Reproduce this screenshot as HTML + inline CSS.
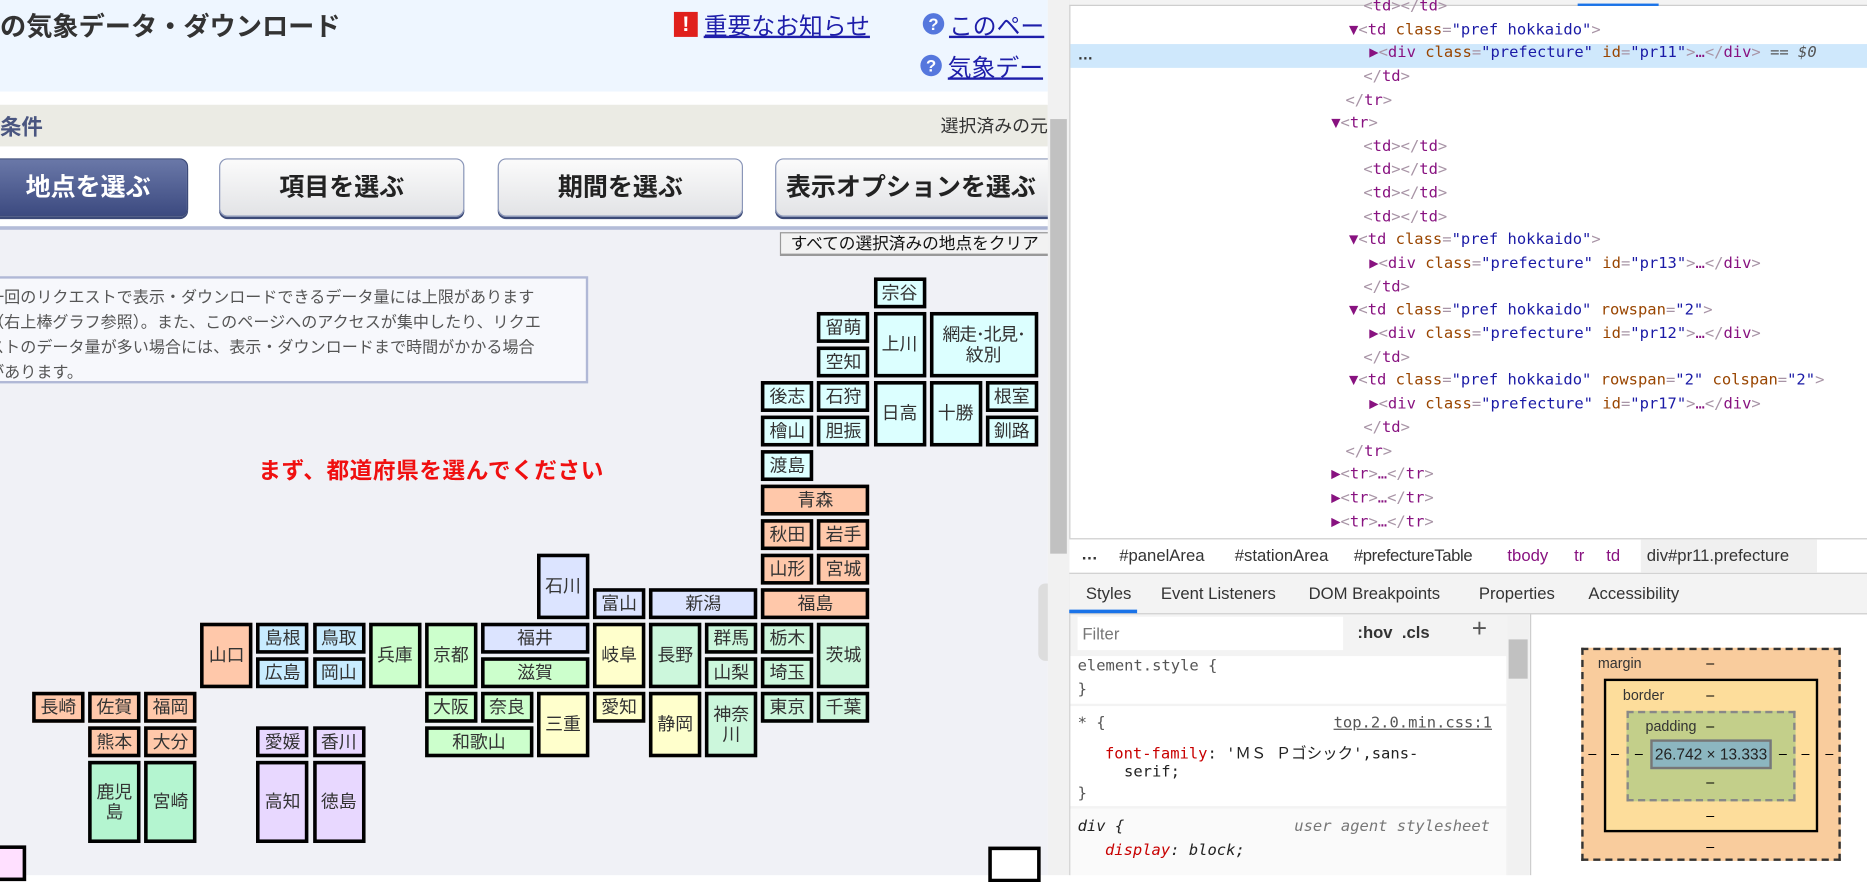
<!DOCTYPE html>
<html><head><meta charset="utf-8"><style>
*{margin:0;padding:0;box-sizing:border-box}
html,body{width:1867px;height:875px;overflow:hidden;background:#fff}
#w{position:absolute;left:0;top:0;width:1568px;height:735px;transform:scale(1.19069);transform-origin:0 0;font-family:"Liberation Sans","Noto Sans CJK JP",sans-serif}
.a{position:absolute;white-space:nowrap}
.btn{position:absolute;top:133px;height:49px;border-radius:7px;border:1px solid #8a96b8;background:linear-gradient(#fbfbfb,#e2e3e6);font-weight:bold;font-size:21px;color:#222;text-align:center;line-height:47px;box-shadow:0 2px 0 #3c4a78}
.c{position:absolute;border:3px solid #000;font-size:15px;color:#333;display:flex;align-items:center;justify-content:center;text-align:center;line-height:17px}
.h{background:#dcffff}.t{background:#ffc8aa}.k{background:#ccf7dc}.b{background:#dce4ff}.y{background:#ffffcc}.g{background:#ccffcc}.cb{background:#c8ecff}.s{background:#e8d8ff}.q{background:#b4f5d0}
.m{font-family:"DejaVu Sans Mono","Liberation Mono",monospace;font-size:13px;position:absolute;white-space:nowrap;color:#881280}
.an{color:#994500}.av{color:#1a1aa6}.pu{color:#a894a6}
.tab{position:absolute;top:490px;font-size:14px;color:#333}
</style></head><body><div id="w">
<div class="a" style="left:0;top:0;width:880px;height:77px;background:#eef6ff"></div>
<div class="a" style="left:0;top:77px;width:880px;height:11px;background:#fff"></div>
<div class="a" style="left:0;top:88px;width:880px;height:35px;background:#ebebe4"></div>
<div class="a" style="left:0;top:123px;width:880px;height:612px;background:#f0f1f6"></div>
<div class="a" style="left:0;top:123px;width:880px;height:67px;background:#fff"></div>
<div class="a" style="left:0;top:190px;width:880px;height:3px;background:#b4bcd8"></div>
<div class="a" style="left:0;top:5px;font-size:22px;font-weight:bold;color:#333">の気象データ・ダウンロード</div>
<div class="a" style="left:566px;top:10px;width:20px;height:21px;background:#e0201c;color:#fff;font-weight:bold;font-size:18px;line-height:21px;text-align:center">!</div>
<div class="a" style="left:591px;top:6px;font-size:20px;color:#1e1eaa;text-decoration:underline">重要なお知らせ</div>
<div class="a" style="left:775px;top:11px;width:18px;height:18px;border-radius:50%;background:#5577dd;color:#fff;font-size:14px;font-weight:bold;line-height:18px;text-align:center">?</div>
<div class="a" style="left:797px;top:6px;font-size:20px;color:#1e1eaa;text-decoration:underline">このペー</div>
<div class="a" style="left:773px;top:46px;width:18px;height:18px;border-radius:50%;background:#5577dd;color:#fff;font-size:14px;font-weight:bold;line-height:18px;text-align:center">?</div>
<div class="a" style="left:796px;top:41px;font-size:20px;color:#1e1eaa;text-decoration:underline">気象デー</div>
<div class="a" style="left:0;top:93px;font-size:18px;font-weight:bold;color:#4a5680">条件</div>
<div class="a" style="left:790px;top:95px;font-size:15px;color:#333">選択済みの元</div>
<div class="btn" style="left:-10px;width:168px;background:linear-gradient(#6a78a8,#3c4a80);color:#fff;border-color:#3c4a78">地点を選ぶ</div>
<div class="btn" style="left:184px;width:206px">項目を選ぶ</div>
<div class="btn" style="left:418px;width:206px">期間を選ぶ</div>
<div class="btn" style="left:651px;width:240px;text-align:left;padding-left:8px">表示オプションを選ぶ</div>
<div class="a" style="left:655px;top:195px;width:240px;height:20px;background:#f2f2f2;border:1px solid #999;border-bottom-width:2px;font-size:14px;line-height:17px;padding-left:8px;color:#111">すべての選択済みの地点をクリア</div>
<div class="a" style="left:-4px;top:232px;width:498px;height:90px;border:2px solid #b0b8d6;background:#f7f8fc;font-size:13.5px;color:#555;line-height:21px;padding:5px 0 0 0;white-space:normal;overflow:hidden"><div style="margin-left:-8px;white-space:nowrap">一回のリクエストで表示・ダウンロードできるデータ量には上限があります<br>（右上棒グラフ参照）。また、このページへのアクセスが集中したり、リクエ<br>ストのデータ量が多い場合には、表示・ダウンロードまで時間がかかる場合<br>があります。</div></div>
<div class="a" style="left:217px;top:381px;font-size:19px;font-weight:bold;color:#f01010;letter-spacing:0.5px">まず、都道府県を選んでください</div>
<div id="grid"></div>
<div class="c" style="left:-3px;top:710px;width:25px;height:30px;background:#ffe0ff"></div>
<div class="c" style="left:830px;top:711px;width:44px;height:30px;background:#fff"></div>
<div class="a" style="left:872px;top:490px;width:10px;height:65px;border-radius:6px 0 0 6px;background:#ddd"></div>
<div class="a" style="left:880px;top:0;width:18px;height:735px;background:#f1f1f1"></div>
<div class="a" style="left:882px;top:100px;width:14px;height:365px;background:#c1c1c1"></div>
<div class="a" style="left:898px;top:0;width:670px;height:735px;background:#fff;border-left:1px solid #ccc"></div>
<div class="a" style="left:898px;top:0;width:670px;height:5px;background:#f3f3f3;border-bottom:1px solid #ccc"></div>
<div class="a" style="left:1325px;top:3px;width:68px;height:2px;background:#1a73e8"></div>
<div class="a" style="left:899px;top:37px;width:669px;height:20px;background:#cfe8fc"></div>
<div class="a" style="left:905px;top:38px;font-size:13px;color:#333;font-weight:bold">…</div>
<div id="code"></div>
<div class="a" style="left:898px;top:452px;width:670px;height:30px;background:#fff;border-top:1px solid #ccc;border-bottom:1px solid #ccc"></div>
<div class="a" style="left:1378px;top:453px;width:148px;height:28px;background:#f0f0f0"></div>
<div class="a" style="left:908px;top:457px;font-size:14px;color:#333;font-weight:bold">…</div>
<div class="a" style="left:940px;top:458px;font-size:14px;color:#333">#panelArea</div>
<div class="a" style="left:1037px;top:458px;font-size:14px;color:#333">#stationArea</div>
<div class="a" style="left:1137px;top:458px;font-size:14px;color:#333;letter-spacing:-0.3px">#prefectureTable</div>
<div class="a" style="left:1266px;top:458px;font-size:14px;color:#881280">tbody</div>
<div class="a" style="left:1322px;top:458px;font-size:14px;color:#881280">tr</div>
<div class="a" style="left:1349px;top:458px;font-size:14px;color:#881280">td</div>
<div class="a" style="left:1383px;top:458px;font-size:14px;color:#333">div#pr11.prefecture</div>
<div class="a" style="left:898px;top:482px;width:670px;height:34px;background:#f3f3f3;border-bottom:1px solid #ccc"></div>
<div class="a" style="left:898px;top:512px;width:57px;height:3px;background:#1a73e8"></div>
<div class="tab" style="left:912px">Styles</div>
<div class="tab" style="left:975px">Event Listeners</div>
<div class="tab" style="left:1099px">DOM Breakpoints</div>
<div class="tab" style="left:1242px">Properties</div>
<div class="tab" style="left:1334px">Accessibility</div>
<div class="a" style="left:899px;top:516px;width:386px;height:219px;background:#f3f3f3"></div>
<div class="a" style="left:905px;top:518px;width:223px;height:28px;background:#fff;font-size:14px;color:#777;padding:6px 0 0 4px">Filter</div>
<div class="a" style="left:1140px;top:523px;font-size:14px;font-weight:bold;color:#333">:hov&nbsp; .cls</div>
<div class="a" style="left:1236px;top:515px;font-size:22px;color:#555">+</div>
<div class="a" style="left:1266px;top:517px;width:18px;height:218px;background:#f1f1f1"></div>
<div class="a" style="left:1267px;top:537px;width:16px;height:33px;background:#c1c1c1"></div>
<div class="a" style="left:1285px;top:516px;width:1px;height:219px;background:#ccc"></div>
<div class="a" style="left:899px;top:551px;width:366px;height:40px;background:#fff"></div>
<div class="m" style="left:905px;top:552px;color:#555">element.style {</div>
<div class="m" style="left:905px;top:572px;color:#555">}</div>
<div class="a" style="left:899px;top:593px;width:366px;height:84px;background:#fff"></div>
<div class="m" style="left:905px;top:600px;color:#555">* {</div>
<div class="m" style="left:1120px;top:600px;color:#555;text-decoration:underline">top.2.0.min.css:1</div>
<div class="m" style="left:928px;top:622px;color:#222"><span style="color:#c80000">font-family</span>: 'ＭＳ Ｐゴシック',sans-</div>
<div class="m" style="left:944px;top:641px;color:#222">serif;</div>
<div class="m" style="left:905px;top:659px;color:#555">}</div>
<div class="a" style="left:899px;top:679px;width:366px;height:56px;background:#fafafa"></div>
<div class="m" style="left:905px;top:687px;color:#222;font-style:italic">div {</div>
<div class="m" style="left:1087px;top:687px;color:#777;font-style:italic">user agent stylesheet</div>
<div class="m" style="left:928px;top:707px;color:#222;font-style:italic"><span style="color:#c80000">display</span>: block;</div>
<div class="a" style="left:1328px;top:544px;width:218px;height:179px;background:#f9cc9d;border:2px dashed #333"></div>
<div class="a" style="left:1347px;top:570px;width:180px;height:129px;background:#fddd9b;border:2px solid #000"></div>
<div class="a" style="left:1366px;top:597px;width:142px;height:76px;background:#c3cf8a;border:2px dashed #888"></div>
<div class="a" style="left:1386px;top:621px;width:102px;height:25px;background:#8cb6c0;border:2px solid #777;font-size:13px;color:#222;text-align:center;line-height:21px">26.742 × 13.333</div>
<div class="a" style="left:1342px;top:550px;font-size:12px;color:#333">margin</div>
<div class="a" style="left:1363px;top:577px;font-size:12px;color:#333">border</div>
<div class="a" style="left:1382px;top:603px;font-size:12px;color:#333">padding</div>
<div class="a" style="left:1433px;top:550px;font-size:12px">–</div>
<div class="a" style="left:1433px;top:577px;font-size:12px">–</div>
<div class="a" style="left:1433px;top:603px;font-size:12px">–</div>
<div class="a" style="left:1433px;top:650px;font-size:12px">–</div>
<div class="a" style="left:1433px;top:678px;font-size:12px">–</div>
<div class="a" style="left:1433px;top:704px;font-size:12px">–</div>
<div class="a" style="left:1334px;top:626px;font-size:12px">–</div>
<div class="a" style="left:1353px;top:626px;font-size:12px">–</div>
<div class="a" style="left:1373px;top:626px;font-size:12px">–</div>
<div class="a" style="left:1494px;top:626px;font-size:12px">–</div>
<div class="a" style="left:1513px;top:626px;font-size:12px">–</div>
<div class="a" style="left:1533px;top:626px;font-size:12px">–</div>
</div>
<script>
var P=[["宗谷",15,0,1,1,"h"],["留萌",14,1,1,1,"h"],["空知",14,2,1,1,"h"],["上川",15,1,1,2,"h"],["<span style='letter-spacing:-1px;white-space:nowrap'>網走･北見･</span><br>紋別",16,1,2,2,"h"],
["後志",13,3,1,1,"h"],["石狩",14,3,1,1,"h"],["日高",15,3,1,2,"h"],["十勝",16,3,1,2,"h"],["根室",17,3,1,1,"h"],
["檜山",13,4,1,1,"h"],["胆振",14,4,1,1,"h"],["釧路",17,4,1,1,"h"],["渡島",13,5,1,1,"h"],
["青森",13,6,2,1,"t"],["秋田",13,7,1,1,"t"],["岩手",14,7,1,1,"t"],["山形",13,8,1,1,"t"],["宮城",14,8,1,1,"t"],
["石川",9,8,1,2,"b"],["富山",10,9,1,1,"b"],["新潟",11,9,2,1,"b"],["福島",13,9,2,1,"t"],
["山口",3,10,1,2,"t"],["島根",4,10,1,1,"cb"],["鳥取",5,10,1,1,"cb"],["兵庫",6,10,1,2,"g"],["京都",7,10,1,2,"g"],["福井",8,10,2,1,"b"],["岐阜",10,10,1,2,"y"],["長野",11,10,1,2,"k"],["群馬",12,10,1,1,"k"],["栃木",13,10,1,1,"k"],["茨城",14,10,1,2,"k"],
["広島",4,11,1,1,"cb"],["岡山",5,11,1,1,"cb"],["滋賀",8,11,2,1,"g"],["山梨",12,11,1,1,"k"],["埼玉",13,11,1,1,"k"],
["長崎",0,12,1,1,"t"],["佐賀",1,12,1,1,"t"],["福岡",2,12,1,1,"t"],["大阪",7,12,1,1,"g"],["奈良",8,12,1,1,"g"],["三重",9,12,1,2,"y"],["愛知",10,12,1,1,"y"],["静岡",11,12,1,2,"y"],["神奈<br>川",12,12,1,2,"k"],["東京",13,12,1,1,"k"],["千葉",14,12,1,1,"k"],
["熊本",1,13,1,1,"t"],["大分",2,13,1,1,"t"],["愛媛",4,13,1,1,"s"],["香川",5,13,1,1,"s"],["和歌山",7,13,2,1,"g"],
["鹿児<br>島",1,14,1,3,"q"],["宮崎",2,14,1,3,"q"],["高知",4,14,1,3,"s"],["徳島",5,14,1,3,"s"]];
var h="";P.forEach(function(p){var x=27+p[1]*47.1,y=233+p[2]*29,w=44*p[3]+3*(p[3]-1),hh=p[4]==3?69:26*p[4]+3*(p[4]-1);
h+='<div class="c '+p[5]+'" style="left:'+x+'px;top:'+y+'px;width:'+w+'px;height:'+hh+'px"><div>'+p[0]+'</div></div>';});
document.getElementById("grid").outerHTML=h;
var T='<span class="pu">&lt;</span>td<span class="pu">&gt;&lt;/</span>td<span class="pu">&gt;</span>',CT='<span class="pu">&lt;/</span>td<span class="pu">&gt;</span>',CR='<span class="pu">&lt;/</span>tr<span class="pu">&gt;</span>';
function td(x){return '▼<span class="pu">&lt;</span>td <span class="an">class</span><span class="pu">=</span><span class="av">"pref hokkaido"</span>'+x+'<span class="pu">&gt;</span>';}
function dv(id,e){return '▶<span class="pu">&lt;</span>div <span class="an">class</span><span class="pu">=</span><span class="av">"prefecture"</span> <span class="an">id</span><span class="pu">=</span><span class="av">"'+id+'"</span><span class="pu">&gt;</span>…<span class="pu">&lt;/</span>div<span class="pu">&gt;</span>'+(e||'');}
var RS=' <span class="an">rowspan</span><span class="pu">=</span><span class="av">"2"</span>',CS=' <span class="an">colspan</span><span class="pu">=</span><span class="av">"2"</span>',TR='▶<span class="pu">&lt;</span>tr<span class="pu">&gt;</span>…<span class="pu">&lt;/</span>tr<span class="pu">&gt;</span>';
var L=[[1145,7,T],[1133,27,td('')],[1150,46,dv('pr11',' <span style="color:#555">== <i>$0</i></span>')],[1145,66,CT],[1130,86,CR],
[1118,105,'▼<span class="pu">&lt;</span>tr<span class="pu">&gt;</span>'],[1145,125,T],[1145,144,T],[1145,164,T],[1145,184,T],
[1133,203,td('')],[1150,223,dv('pr13')],[1145,243,CT],[1133,262,td(RS)],[1150,282,dv('pr12')],[1145,302,CT],
[1133,321,td(RS+CS)],[1150,341,dv('pr17')],[1145,361,CT],[1130,381,CR],[1118,400,TR],[1118,420,TR],[1118,440,TR]];
var c="";L.forEach(function(l){c+='<div class="m" style="left:'+l[0]+'px;top:'+(l[1]-9)+'px">'+l[2]+'</div>';});
document.getElementById("code").outerHTML=c;
</script>
</body></html>
